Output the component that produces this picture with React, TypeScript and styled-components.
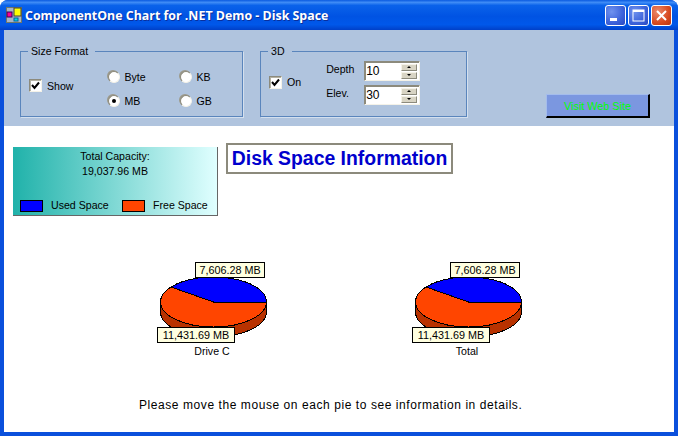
import React from 'react';
import styled, { createGlobalStyle } from 'styled-components';

type OptionProps = { label: string; checked?: boolean };
type CheckProps = { label: string; lift: number };
type PieProps = { caption: string; used: string; free: string };

const GlobalStyle = createGlobalStyle`
  html, body {
    margin: 0;
    padding: 0;
    background: #ffffff;
    overflow: hidden;
  }
  * {
    box-sizing: border-box;
  }
`;

const Window = styled.div`
  width: 678px;
  height: 436px;
  display: flex;
  flex-direction: column;
  background: #0a50dc;
  border-radius: 8px 8px 0 0;
  font-family: 'Liberation Sans', Arial, sans-serif;
  font-size: 10.6px;
  color: #000000;
  overflow: hidden;
`;

const TitleBar = styled.div`
  height: 30px;
  flex: none;
  display: flex;
  align-items: center;
  padding: 0 6px;
  background: linear-gradient(180deg, #0a5ae0 0%, #3f8cf6 8%, #0a62ea 18%, #0053e3 55%, #0058ea 82%, #0040c8 100%);
`;

const AppIcon = styled.svg`
  width: 16px;
  height: 16px;
  flex: none;
`;

const TitleText = styled.div`
  margin-left: 3px;
  font-family: 'Open Sans', Verdana, sans-serif;
  font-size: 12.4px;
  font-weight: 700;
  color: #ffffff;
  text-shadow: 1px 1px 0 #0a2f9c;
  white-space: nowrap;
`;

const Controls = styled.div`
  margin-left: auto;
  display: flex;
  gap: 2px;
`;

const ControlButton = styled.div<{ $close?: boolean }>`
  width: 21px;
  height: 21px;
  border: 1px solid #ffffff;
  border-radius: 3px;
  display: flex;
  align-items: center;
  justify-content: center;
  background: ${(p) =>
    p.$close
      ? 'radial-gradient(circle at 30% 30%, #ec8a6c, #d84a20 60%, #b83410)'
      : 'radial-gradient(circle at 30% 30%, #6f92ee, #3c62da 60%, #2a48c0)'};
`;

const Body = styled.div`
  flex: 1;
  margin: 0 4px 4px;
  display: flex;
  flex-direction: column;
  background: #ffffff;
`;

const OptionsPanel = styled.div`
  height: 96px;
  flex: none;
  display: flex;
  align-items: flex-end;
  gap: 17px;
  padding: 0 24px 8px 16px;
  background: #b0c4de;
`;

const Group = styled.fieldset<{ $width: number }>`
  width: ${(p) => p.$width}px;
  height: 73px;
  margin: 0 0 1px;
  padding: 0;
  display: flex;
  align-items: center;
  border: 1px solid #5a85bc;
  box-shadow: 1px 1px 0 #d4e0ee;
`;

const GroupTitle = styled.legend`
  margin-left: 7px;
  padding: 0 7px 0 3px;
  line-height: 14px;
`;

const CheckRow = styled.label<{ $lift: number }>`
  display: flex;
  align-items: center;
  gap: 5px;
  margin-left: 8px;
  margin-top: -${(p) => p.$lift}px;
`;

const CheckBox = styled.span`
  width: 13px;
  height: 13px;
  display: flex;
  align-items: center;
  justify-content: center;
  background: #ffffff;
  border: 1px solid;
  border-color: #8c8a7c #f4f2e8 #f4f2e8 #8c8a7c;
  box-shadow: inset 1px 1px 0 #b4b2a4;
`;

const RadioGrid = styled.div`
  display: grid;
  grid-template-columns: 72px 60px;
  grid-auto-rows: 24px;
  margin-left: 34px;
  margin-top: 3px;
`;

const RadioRow = styled.label`
  display: flex;
  align-items: center;
  gap: 5px;
`;

const RadioDot = styled.span<{ $on?: boolean }>`
  width: 12px;
  height: 12px;
  border-radius: 50%;
  display: flex;
  align-items: center;
  justify-content: center;
  background: #ffffff;
  border: 1px solid;
  border-color: #8c8a7c #f4f2e8 #f4f2e8 #8c8a7c;
  box-shadow: -1px -1px 0 #9c9a8c;
  &::after {
    content: '';
    width: 4px;
    height: 4px;
    border-radius: 50%;
    background: ${(p) => (p.$on ? '#000000' : 'transparent')};
  }
`;

const DepthGrid = styled.div`
  display: grid;
  grid-template-columns: 38px 56px;
  grid-auto-rows: 20px;
  row-gap: 4px;
  align-items: center;
  margin-left: 25px;
  margin-top: -8px;
`;

const DepthLabel = styled.span`
  margin-top: -5px;
`;

const SpinBox = styled.div`
  width: 56px;
  height: 20px;
  display: flex;
  align-items: center;
  justify-content: space-between;
  padding: 0 2px 0 1px;
  background: #ffffff;
  border: 1px solid;
  border-color: #8c8a7c #f4f2e8 #f4f2e8 #8c8a7c;
  box-shadow: inset 1px 1px 0 #8c8a7c;
  font-size: 12px;
`;

const SpinButtons = styled.div`
  width: 16px;
  display: flex;
  flex-direction: column;
  gap: 1px;
`;

const SpinButton = styled.div<{ $down?: boolean }>`
  height: 7px;
  display: flex;
  align-items: center;
  justify-content: center;
  background: #d8d4c4;
  border: 1px solid;
  border-color: #f4f2e8 #8c8a7c #8c8a7c #f4f2e8;
  &::after {
    content: '';
    border-left: 2px solid transparent;
    border-right: 2px solid transparent;
    ${(p) => (p.$down ? 'border-top: 2px solid #000000;' : 'border-bottom: 2px solid #000000;')}
  }
`;

const WebButton = styled.div`
  width: 104px;
  height: 24px;
  margin-left: auto;
  display: flex;
  align-items: center;
  justify-content: center;
  background: #7b97e0;
  border: 1px solid #a4bcec;
  border-right: 2px solid #000000;
  border-bottom: 2px solid #000000;
  color: #00ff00;
  font-size: 10.8px;
`;

const TopRow = styled.div`
  display: flex;
  align-items: flex-start;
  gap: 8px;
  padding: 17px 0 0 9px;
`;

const LegendBox = styled.div`
  width: 205px;
  height: 69px;
  margin-top: 4px;
  display: flex;
  flex-direction: column;
  align-items: center;
  padding-top: 2px;
  background: linear-gradient(90deg, #20b2aa, #e0ffff);
  border-right: 1px solid #666666;
  border-bottom: 1px solid #666666;
  line-height: 15px;
`;

const LegendKeys = styled.div`
  width: 100%;
  margin-top: auto;
  margin-bottom: 2px;
  display: flex;
  align-items: center;
  padding-left: 7px;
`;

const Swatch = styled.span<{ $color: string }>`
  width: 23px;
  height: 12px;
  background: ${(p) => p.$color};
  border: 1px solid #000000;
  margin-right: 8px;
`;

const KeyLabel = styled.span`
  width: 71px;
`;

const Heading = styled.div`
  width: 227px;
  height: 31px;
  display: flex;
  align-items: center;
  justify-content: center;
  border: 2px solid #8c8a7c;
  font-size: 19.4px;
  font-weight: 700;
  color: #0000cd;
  white-space: nowrap;
`;

const ChartRow = styled.div`
  display: flex;
  gap: 135px;
  margin-top: 46px;
  padding-left: 153px;
`;

const PieCard = styled.div`
  position: relative;
  width: 120px;
  padding: 15px 0 0 3px;
`;

const PieSvg = styled.svg`
  display: block;
  width: 108px;
  height: 61px;
  shape-rendering: crispEdges;
`;

const ValueTag = styled.div<{ $free?: boolean }>`
  position: absolute;
  height: 16px;
  display: flex;
  align-items: center;
  justify-content: center;
  background: #ffffe0;
  border: 1px solid #000000;
  font-size: 10.8px;
  white-space: nowrap;
  ${(p) =>
    p.$free
      ? 'left: 0; top: 65px; width: 78px;'
      : 'left: 38px; top: 0; width: 70px;'}
`;

const PieCaption = styled.div`
  width: 104px;
  margin-top: 6px;
  text-align: center;
  line-height: 14px;
`;

const Hint = styled.div`
  margin-top: 40px;
  padding-left: 135px;
  line-height: 14px;
  font-size: 12px;
  letter-spacing: 0.57px;
`;

const Option = ({ label, checked }: OptionProps) => (
  <RadioRow>
    <RadioDot $on={checked} />
    {label}
  </RadioRow>
);

const Check = ({ label, lift }: CheckProps) => (
  <CheckRow $lift={lift}>
    <CheckBox>
      <svg width="9" height="9" viewBox="0 0 9 9">
        <path d="M1 4 L3.5 7 L8 1.5" fill="none" stroke="#000" strokeWidth="2" />
      </svg>
    </CheckBox>
    {label}
  </CheckRow>
);

const Spin = ({ value }: { value: string }) => (
  <SpinBox>
    {value}
    <SpinButtons>
      <SpinButton />
      <SpinButton $down />
    </SpinButtons>
  </SpinBox>
);

const Pie = ({ caption, used, free }: PieProps) => (
  <PieCard>
    <PieSvg viewBox="0 0 108 61">
      <path d="M0.5 25 V35 A53 25 0 0 0 106.5 35 V25 Z" fill="#b83200" stroke="#000" />
      <ellipse cx="53.5" cy="25" rx="53" ry="25" fill="#ff4500" stroke="#000" />
      <path d="M53.5 25 L11 10 A53 25 0 0 1 106.5 25 Z" fill="#0000ff" stroke="#000" />
    </PieSvg>
    <ValueTag>{used}</ValueTag>
    <ValueTag $free>{free}</ValueTag>
    <PieCaption>{caption}</PieCaption>
  </PieCard>
);

const App: React.FC = () => (
  <Window>
    <GlobalStyle />
    <TitleBar>
      <AppIcon viewBox="0 0 16 16">
        <rect x="0.5" y="0.5" width="15" height="15" fill="#a8b4c8" stroke="#707868" />
        <rect x="1" y="5" width="5" height="5" fill="#ff0090" stroke="#300060" />
        <rect x="8" y="1" width="7" height="8" fill="#ffff00" stroke="#404040" />
        <rect x="8" y="11" width="4" height="3" fill="#00e0e0" stroke="#0060a0" />
      </AppIcon>
      <TitleText>ComponentOne Chart for .NET Demo - Disk Space</TitleText>
      <Controls>
        <ControlButton>
          <svg width="13" height="13" viewBox="0 0 13 13">
            <rect x="1" y="9" width="7" height="3" fill="#fff" />
          </svg>
        </ControlButton>
        <ControlButton>
          <svg width="13" height="13" viewBox="0 0 13 13">
            <rect x="1" y="1" width="11" height="11" fill="none" stroke="#fff" />
            <rect x="1" y="1" width="11" height="2" fill="#fff" />
          </svg>
        </ControlButton>
        <ControlButton $close>
          <svg width="13" height="13" viewBox="0 0 13 13">
            <path d="M2 2 L11 11 M11 2 L2 11" stroke="#fff" strokeWidth="2" />
          </svg>
        </ControlButton>
      </Controls>
    </TitleBar>
    <Body>
      <OptionsPanel>
        <Group $width={223}>
          <GroupTitle>Size Format</GroupTitle>
          <Check label="Show" lift={3} />
          <RadioGrid>
            <Option label="Byte" />
            <Option label="KB" />
            <Option label="MB" checked />
            <Option label="GB" />
          </RadioGrid>
        </Group>
        <Group $width={207}>
          <GroupTitle>3D</GroupTitle>
          <Check label="On" lift={10} />
          <DepthGrid>
            <DepthLabel>Depth</DepthLabel>
            <Spin value="10" />
            <DepthLabel>Elev.</DepthLabel>
            <Spin value="30" />
          </DepthGrid>
        </Group>
        <WebButton>Visit Web Site</WebButton>
      </OptionsPanel>
      <TopRow>
        <LegendBox>
          <div>Total Capacity:</div>
          <div>19,037.96 MB</div>
          <LegendKeys>
            <Swatch $color="#0000ff" />
            <KeyLabel>Used Space</KeyLabel>
            <Swatch $color="#ff4500" />
            <span>Free Space</span>
          </LegendKeys>
        </LegendBox>
        <Heading>Disk Space Information</Heading>
      </TopRow>
      <ChartRow>
        <Pie caption="Drive C" used="7,606.28 MB" free="11,431.69 MB" />
        <Pie caption="Total" used="7,606.28 MB" free="11,431.69 MB" />
      </ChartRow>
      <Hint>Please move the mouse on each pie to see information in details.</Hint>
    </Body>
  </Window>
);

export default App;
